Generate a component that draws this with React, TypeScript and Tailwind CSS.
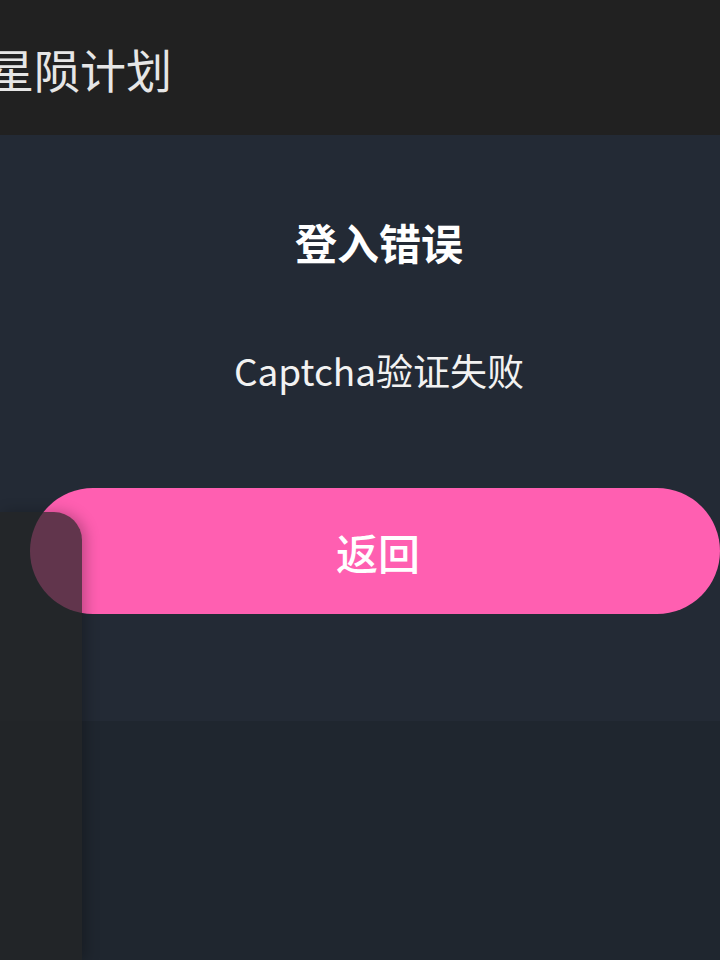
export default function App() {
  return (
    <div className="relative h-[960px] w-full overflow-hidden bg-[#1f262f] font-['Noto_Sans_CJK_SC','Noto_Sans',sans-serif] text-white">
      <header className="flex h-[135px] items-center bg-[#212121]">
        <h1 className="-ml-[12px] whitespace-nowrap text-[46px] leading-none text-[#e6e6e6]">星陨计划</h1>
      </header>

      <main className="flex flex-col bg-[#232a35] pb-[107px] pt-[77px]">
        <div className="flex flex-col items-center pl-[38px]">
          <h2 className="text-[42px] font-bold leading-[60px]">登入错误</h2>
          <p className="mt-[72px] text-[37px] leading-[52px] text-[#f2f2f2]">Captcha验证失败</p>
        </div>
        <button className="mt-[92px] ml-[30px] flex h-[126px] w-[690px] items-center justify-center rounded-full bg-[#ff5fb1] pl-[6px] text-[42px] font-medium">
          返回
        </button>
      </main>

      <aside className="absolute bottom-0 left-0 top-[512px] w-[82px] rounded-tr-[28px] bg-[rgba(36,37,38,0.72)] shadow-[4px_0_14px_rgba(0,0,0,0.25)]" />
    </div>
  );
}
